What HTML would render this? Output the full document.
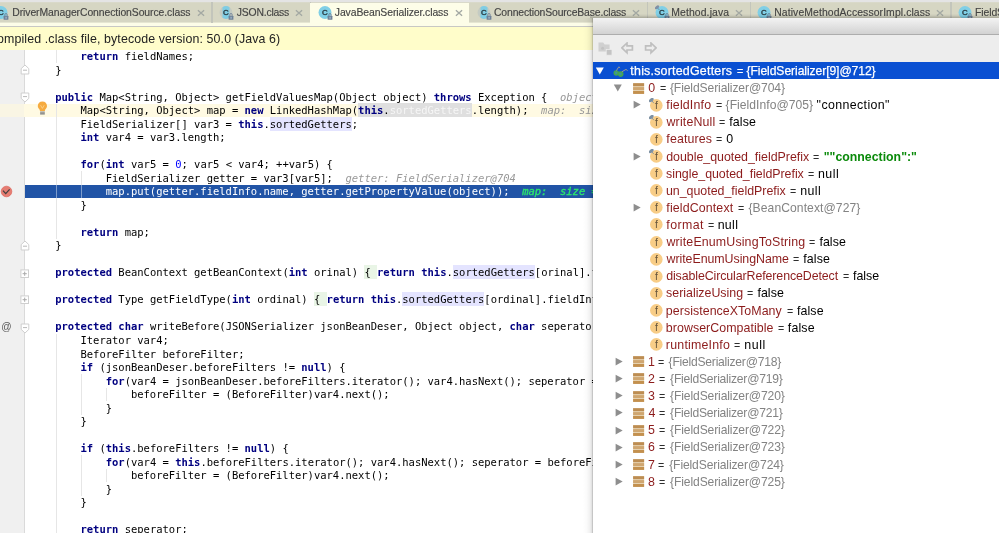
<!DOCTYPE html>
<html><head><meta charset="utf-8"><title>Debugger</title>
<style>
html,body{margin:0;padding:0}
body{width:999px;height:533px;overflow:hidden;position:relative;background:#fff;font-family:"Liberation Sans",sans-serif;}
#top{position:absolute;left:0;top:0;width:999px;height:3px;background:#e4e4e4}
#tabs{position:absolute;left:0;top:2px;width:999px;height:21px;background:linear-gradient(#dcdcd0 0,#d6d6c3 1px,#d6d6c3 20px,#e6e6d2 20px,#e6e6d2 21px);overflow:hidden}
#tabline{position:absolute;left:0;top:23px;width:999px;height:4px;background:#fdfde8;border-bottom:1px solid #c8c8c4;box-sizing:border-box}
.tabact{position:absolute;top:0.5px;height:23px;background:#fdfde8}
.tic{position:absolute;top:3.3px;line-height:0}
.ttx{position:absolute;top:4.4px;font-size:10.4px;color:#444;-webkit-text-stroke:0.15px #444;white-space:pre;line-height:14px}
.tcl{position:absolute;top:7.0px;line-height:0}
.tsep{position:absolute;top:0;width:1.3px;height:20.6px;background:#c3c5bb}
#banner{position:absolute;left:0;top:27px;width:999px;height:23px;background:#fffdca}
#banner span{position:absolute;left:-2.95px;top:5.2px;font-size:12.4px;letter-spacing:0.11px;color:#222;white-space:pre;line-height:15px}
#editor{position:absolute;left:0;top:50px;width:999px;height:483px;background:#fff;overflow:hidden}
#gutter{position:absolute;left:0;top:50px;width:25px;height:483px;background:#f0f0f0;border-right:1px solid #dadada;box-sizing:border-box}
.ln{position:absolute;left:0;width:999px;height:13.52px}
.ln.cur{background:#fffae3}
.ln.exec{background:#2154a6;left:25px;width:974px}
.tl{position:absolute;left:30.0px;height:14px;line-height:14px;font-family:"DejaVu Sans Mono","Liberation Mono",monospace;font-size:10.5px;letter-spacing:-0.0124px;white-space:pre;color:#000}
.tl b{color:#000080;font-weight:bold}
.tl i.n{color:#0000ff;font-style:normal}
.tl .h{background:#e4e4ff;padding:0.75px 0 0.55px}
.tl .s{background:#dfdfdf;padding:0.75px 0 0.55px}
.tl .w{color:#f6f6f6}
.tl .f{background:#e9f5e6;padding:0.75px 0 0.55px}
.tl .v{color:#999;font-style:italic}
.tl .g{color:#2be56c;font-style:italic;-webkit-text-stroke:0.35px #2be56c}
.tl.ex{color:#fff}
.tl.ex b{color:#fff}
.guide{position:absolute;width:1px;background:#e6e6e6}
.guide2{position:absolute;width:1px;background:#7d9ccc}
.gm{position:absolute}
.at{position:absolute;left:1.3px;top:320.3px;font-size:10.2px;color:#5a5a5a;line-height:14px}
#curgut{position:absolute;left:0;top:103.64px;width:24px;height:13.52px;background:#f9f5e4}
#popup{position:absolute;left:592.8px;top:18.2px;width:407px;height:515px;background:#fff;}
#pshadow{position:absolute;left:582.8px;top:18.2px;width:10px;height:515px;background:linear-gradient(to right,rgba(0,0,0,0),rgba(0,0,0,0.02) 40%,rgba(0,0,0,0.06) 70%,rgba(0,0,0,0.12) 88%,rgba(0,0,0,0.3))}
#pshadowt{position:absolute;left:590px;top:14.4px;width:409px;height:3.8px;background:linear-gradient(to bottom,rgba(0,0,0,0),rgba(0,0,0,0.06) 40%,rgba(0,0,0,0.22))}
#ptitle{position:absolute;left:0;top:0;width:100%;height:16.4px;background:linear-gradient(#f3f3f3,#d2d2d2);border-bottom:1px solid #adadad;box-sizing:border-box}
#ptool{position:absolute;left:0;top:16.4px;width:100%;height:27.4px;background:#ededed}
.row{position:absolute;left:0;width:100%;height:17.11px;color:#000;white-space:pre}
.row.sel{background:#0a50d2;color:#fff;height:16.9px;-webkit-text-stroke:0.25px #fff}
.row .ic{position:absolute;line-height:0}
.row .sg{position:absolute;line-height:17px}
.row .eq{transform:scaleX(0.86);transform-origin:0 0;color:#2e2e2e}
.row.sel .eq{color:#fff}
.nm{color:#8c1b1b}
.gr{color:#838383}
.sv{color:#0a8a0a;font-weight:bold}
#all{position:absolute;left:0;top:0;width:999px;height:533px;will-change:transform}
</style></head><body><div id="all">
<div id="top"></div>
<div id="tabs"><span class="tic" style="left:-6.1px"><svg width="16" height="16" viewBox="0 0 16 16"><circle cx="7" cy="7.5" r="6.5" fill="#80cfe6"/><text x="6.8" y="10.45" text-anchor="middle" font-family="Liberation Sans, sans-serif" font-size="8" fill="#27363c" stroke="#27363c" stroke-width="0.35">C</text><rect x="9.6" y="10.7" width="4.8" height="4.1" rx="0.5" fill="#6f8298"/><path d="M10.8 10.8 V9.7 a1.2 1.2 0 0 1 2.4 0 V10.8" stroke="#6f8298" stroke-width="0.9" fill="none"/><rect x="11.6" y="11.8" width="0.9" height="1.9" fill="#b9d3e4"/></svg></span><span class="ttx" style="left:12.24px;letter-spacing:-0.075px">DriverManagerConnectionSource.class</span><span class="tcl" style="left:196.5px"><svg width="8" height="8" viewBox="0 0 8 8"><path d="M0.9 1.2 L7.1 6.8 M7.1 1.2 L0.9 6.8" stroke="#a3a8a3" stroke-width="1.25" fill="none"/></svg></span><div class="tsep" style="left:211.4px"></div><span class="tic" style="left:219.3px"><svg width="16" height="16" viewBox="0 0 16 16"><circle cx="7" cy="7.5" r="6.4" fill="#9fb4c4" opacity="0.32"/><path d="M3.5 2.2 A6.4 6.4 0 0 1 10.5 2.2 V12.8 A6.4 6.4 0 0 1 3.5 12.8 Z" fill="#7fcde4"/><text x="6.8" y="10.45" text-anchor="middle" font-family="Liberation Sans, sans-serif" font-size="8" fill="#27363c" stroke="#27363c" stroke-width="0.35">C</text><rect x="9.6" y="10.7" width="4.8" height="4.1" rx="0.5" fill="#6f8298"/><path d="M10.8 10.8 V9.7 a1.2 1.2 0 0 1 2.4 0 V10.8" stroke="#6f8298" stroke-width="0.9" fill="none"/><rect x="11.6" y="11.8" width="0.9" height="1.9" fill="#b9d3e4"/></svg></span><span class="ttx" style="left:236.80px;letter-spacing:-0.195px">JSON.class</span><span class="tcl" style="left:295.1px"><svg width="8" height="8" viewBox="0 0 8 8"><path d="M0.9 1.2 L7.1 6.8 M7.1 1.2 L0.9 6.8" stroke="#a3a8a3" stroke-width="1.25" fill="none"/></svg></span><div class="tsep" style="left:309.7px"></div><div class="tabact" style="left:310.0px;width:159.1px"></div><span class="tic" style="left:317.6px"><svg width="16" height="16" viewBox="0 0 16 16"><circle cx="7" cy="7.5" r="6.5" fill="#80cfe6"/><text x="6.8" y="10.45" text-anchor="middle" font-family="Liberation Sans, sans-serif" font-size="8" fill="#27363c" stroke="#27363c" stroke-width="0.35">C</text><rect x="9.6" y="10.7" width="4.8" height="4.1" rx="0.5" fill="#6f8298"/><path d="M10.8 10.8 V9.7 a1.2 1.2 0 0 1 2.4 0 V10.8" stroke="#6f8298" stroke-width="0.9" fill="none"/><rect x="11.6" y="11.8" width="0.9" height="1.9" fill="#b9d3e4"/></svg></span><span class="ttx" style="left:334.80px;letter-spacing:-0.083px">JavaBeanSerializer.class</span><span class="tcl" style="left:454.5px"><svg width="8" height="8" viewBox="0 0 8 8"><path d="M0.9 1.2 L7.1 6.8 M7.1 1.2 L0.9 6.8" stroke="#a3a8a3" stroke-width="1.25" fill="none"/></svg></span><span class="tic" style="left:477.2px"><svg width="16" height="16" viewBox="0 0 16 16"><circle cx="7" cy="7.5" r="6.4" fill="#9fb4c4" opacity="0.32"/><path d="M3.5 2.2 A6.4 6.4 0 0 1 10.5 2.2 V12.8 A6.4 6.4 0 0 1 3.5 12.8 Z" fill="#7fcde4"/><text x="6.8" y="10.45" text-anchor="middle" font-family="Liberation Sans, sans-serif" font-size="8" fill="#27363c" stroke="#27363c" stroke-width="0.35">C</text><rect x="9.6" y="10.7" width="4.8" height="4.1" rx="0.5" fill="#6f8298"/><path d="M10.8 10.8 V9.7 a1.2 1.2 0 0 1 2.4 0 V10.8" stroke="#6f8298" stroke-width="0.9" fill="none"/><rect x="11.6" y="11.8" width="0.9" height="1.9" fill="#b9d3e4"/></svg></span><span class="ttx" style="left:494.01px;letter-spacing:-0.137px">ConnectionSourceBase.class</span><span class="tcl" style="left:632.0px"><svg width="8" height="8" viewBox="0 0 8 8"><path d="M0.9 1.2 L7.1 6.8 M7.1 1.2 L0.9 6.8" stroke="#a3a8a3" stroke-width="1.25" fill="none"/></svg></span><div class="tsep" style="left:646.6px"></div><span class="tic" style="left:654.8px"><svg width="16" height="16" viewBox="0 0 16 16"><circle cx="7" cy="7.5" r="6.5" fill="#80cfe6"/><text x="6.8" y="10.45" text-anchor="middle" font-family="Liberation Sans, sans-serif" font-size="8" fill="#27363c" stroke="#27363c" stroke-width="0.35">C</text><rect x="9.6" y="10.7" width="4.8" height="4.1" rx="0.5" fill="#6f8298"/><path d="M10.8 10.8 V9.7 a1.2 1.2 0 0 1 2.4 0 V10.8" stroke="#6f8298" stroke-width="0.9" fill="none"/><rect x="11.6" y="11.8" width="0.9" height="1.9" fill="#b9d3e4"/><ellipse cx="2.0" cy="2.3" rx="2.5" ry="1.4" transform="rotate(-40 2.0 2.3)" fill="#8090a6"/><path d="M2.6 3.0 L4.4 5.0" stroke="#6d7f95" stroke-width="0.8"/></svg></span><span class="ttx" style="left:671.24px;letter-spacing:0.121px">Method.java</span><span class="tcl" style="left:734.8px"><svg width="8" height="8" viewBox="0 0 8 8"><path d="M0.9 1.2 L7.1 6.8 M7.1 1.2 L0.9 6.8" stroke="#a3a8a3" stroke-width="1.25" fill="none"/></svg></span><div class="tsep" style="left:749.6px"></div><span class="tic" style="left:757.0px"><svg width="16" height="16" viewBox="0 0 16 16"><circle cx="7" cy="7.5" r="6.5" fill="#80cfe6"/><text x="6.8" y="10.45" text-anchor="middle" font-family="Liberation Sans, sans-serif" font-size="8" fill="#27363c" stroke="#27363c" stroke-width="0.35">C</text><rect x="9.6" y="10.7" width="4.8" height="4.1" rx="0.5" fill="#6f8298"/><path d="M10.8 10.8 V9.7 a1.2 1.2 0 0 1 2.4 0 V10.8" stroke="#6f8298" stroke-width="0.9" fill="none"/><rect x="11.6" y="11.8" width="0.9" height="1.9" fill="#b9d3e4"/></svg></span><span class="ttx" style="left:774.24px;letter-spacing:0.103px">NativeMethodAccessorImpl.class</span><span class="tcl" style="left:936.2px"><svg width="8" height="8" viewBox="0 0 8 8"><path d="M0.9 1.2 L7.1 6.8 M7.1 1.2 L0.9 6.8" stroke="#a3a8a3" stroke-width="1.25" fill="none"/></svg></span><div class="tsep" style="left:950.4px"></div><span class="tic" style="left:958.2px"><svg width="16" height="16" viewBox="0 0 16 16"><circle cx="7" cy="7.5" r="6.5" fill="#80cfe6"/><text x="6.8" y="10.45" text-anchor="middle" font-family="Liberation Sans, sans-serif" font-size="8" fill="#27363c" stroke="#27363c" stroke-width="0.35">C</text><rect x="9.6" y="10.7" width="4.8" height="4.1" rx="0.5" fill="#6f8298"/><path d="M10.8 10.8 V9.7 a1.2 1.2 0 0 1 2.4 0 V10.8" stroke="#6f8298" stroke-width="0.9" fill="none"/><rect x="11.6" y="11.8" width="0.9" height="1.9" fill="#b9d3e4"/></svg></span><span class="ttx" style="left:975.10px;letter-spacing:-0.1px">FieldSerializer.class</span><span class="tcl" style="left:1096.0px"><svg width="8" height="8" viewBox="0 0 8 8"><path d="M0.9 1.2 L7.1 6.8 M7.1 1.2 L0.9 6.8" stroke="#a3a8a3" stroke-width="1.25" fill="none"/></svg></span><div class="tsep" style="left:1120.0px"></div></div>
<div id="tabline"></div>
<div id="banner"><span>ompiled .class file, bytecode version: 50.0 (Java 6)</span></div>
<div id="editor"></div>
<div id="gutter"></div>
<div id="code">
<div class="ln" style="top:49.56px"></div>
<div class="ln" style="top:63.08px"></div>
<div class="ln" style="top:76.60px"></div>
<div class="ln" style="top:90.12px"></div>
<div class="ln cur" style="top:103.64px"></div>
<div class="ln" style="top:117.16px"></div>
<div class="ln" style="top:130.68px"></div>
<div class="ln" style="top:144.20px"></div>
<div class="ln" style="top:157.72px"></div>
<div class="ln" style="top:171.24px"></div>
<div class="ln exec" style="top:184.76px"></div>
<div class="ln" style="top:198.28px"></div>
<div class="ln" style="top:211.80px"></div>
<div class="ln" style="top:225.32px"></div>
<div class="ln" style="top:238.84px"></div>
<div class="ln" style="top:252.36px"></div>
<div class="ln" style="top:265.88px"></div>
<div class="ln" style="top:279.40px"></div>
<div class="ln" style="top:292.92px"></div>
<div class="ln" style="top:306.44px"></div>
<div class="ln" style="top:319.96px"></div>
<div class="ln" style="top:333.48px"></div>
<div class="ln" style="top:347.00px"></div>
<div class="ln" style="top:360.52px"></div>
<div class="ln" style="top:374.04px"></div>
<div class="ln" style="top:387.56px"></div>
<div class="ln" style="top:401.08px"></div>
<div class="ln" style="top:414.60px"></div>
<div class="ln" style="top:428.12px"></div>
<div class="ln" style="top:441.64px"></div>
<div class="ln" style="top:455.16px"></div>
<div class="ln" style="top:468.68px"></div>
<div class="ln" style="top:482.20px"></div>
<div class="ln" style="top:495.72px"></div>
<div class="ln" style="top:509.24px"></div>
<div class="ln" style="top:522.76px"></div>
<div class="guide" style="left:55.8px;top:49.6px;height:13.5px"></div><div class="guide" style="left:55.8px;top:103.6px;height:135.2px"></div><div class="guide" style="left:81.1px;top:171.2px;height:27.0px"></div><div class="guide" style="left:55.8px;top:333.5px;height:202.8px"></div><div class="guide" style="left:81.1px;top:374.0px;height:40.6px"></div><div class="guide" style="left:106.3px;top:387.6px;height:13.5px"></div><div class="guide" style="left:81.1px;top:455.2px;height:40.6px"></div><div class="guide" style="left:106.3px;top:468.7px;height:13.5px"></div>
<div class="guide2" style="left:55.8px;top:184.8px;height:13.5px"></div><div class="guide2" style="left:81.1px;top:184.8px;height:13.5px"></div>
<div class="tl" style="top:49.10px">        <b>return</b> fieldNames;</div>
<div class="tl" style="top:63.10px">    }</div>
<div class="tl" style="top:90.10px">    <b>public</b> Map&lt;String, Object&gt; getFieldValuesMap(Object object) <b>throws</b> Exception {  <span class="v">object: JavaBeanSerializer@703</span></div>
<div class="tl" style="top:103.10px">        Map&lt;String, Object&gt; map = <b>new</b> LinkedHashMap(<span class="s"><b>this</b>.<span class="w">sortedGetters</span></span>.length);  <span class="v">map:  size = 0</span></div>
<div class="tl" style="top:117.10px">        FieldSerializer[] var3 = <b>this</b>.<span class="h">sortedGetters</span>;</div>
<div class="tl" style="top:130.10px">        <b>int</b> var4 = var3.length;</div>
<div class="tl" style="top:157.10px">        <b>for</b>(<b>int</b> var5 = <i class="n">0</i>; var5 &lt; var4; ++var5) {</div>
<div class="tl" style="top:171.10px">            FieldSerializer getter = var3[var5];  <span class="v">getter: FieldSerializer@704</span></div>
<div class="tl ex" style="top:184.10px">            map.put(getter.fieldInfo.name, getter.getPropertyValue(object));  <span class="g">map:  size = 0</span></div>
<div class="tl" style="top:198.10px">        }</div>
<div class="tl" style="top:225.10px">        <b>return</b> map;</div>
<div class="tl" style="top:238.10px">    }</div>
<div class="tl" style="top:265.10px">    <b>protected</b> BeanContext getBeanContext(<b>int</b> orinal) <span class="f">{ </span><b>return</b> <b>this</b>.<span class="h">sortedGetters</span>[orinal].fieldContext;<span class="f"> }</span></div>
<div class="tl" style="top:292.10px">    <b>protected</b> Type getFieldType(<b>int</b> ordinal) <span class="f">{ </span><b>return</b> <b>this</b>.<span class="h">sortedGetters</span>[ordinal].fieldInfo.fieldType;<span class="f"> }</span></div>
<div class="tl" style="top:319.10px">    <b>protected</b> <b>char</b> writeBefore(JSONSerializer jsonBeanDeser, Object object, <b>char</b> seperator) {</div>
<div class="tl" style="top:333.10px">        Iterator var4;</div>
<div class="tl" style="top:347.10px">        BeforeFilter beforeFilter;</div>
<div class="tl" style="top:360.10px">        <b>if</b> (jsonBeanDeser.beforeFilters != <b>null</b>) {</div>
<div class="tl" style="top:374.10px">            <b>for</b>(var4 = jsonBeanDeser.beforeFilters.iterator(); var4.hasNext(); seperator = beforeFilter.writeBefore(jsonBeanDeser, object, seperator)) {</div>
<div class="tl" style="top:387.10px">                beforeFilter = (BeforeFilter)var4.next();</div>
<div class="tl" style="top:401.10px">            }</div>
<div class="tl" style="top:414.10px">        }</div>
<div class="tl" style="top:441.10px">        <b>if</b> (<b>this</b>.beforeFilters != <b>null</b>) {</div>
<div class="tl" style="top:455.10px">            <b>for</b>(var4 = <b>this</b>.beforeFilters.iterator(); var4.hasNext(); seperator = beforeFilter.writeBefore(jsonBeanDeser, object, seperator)) {</div>
<div class="tl" style="top:468.10px">                beforeFilter = (BeforeFilter)var4.next();</div>
<div class="tl" style="top:482.10px">            }</div>
<div class="tl" style="top:495.10px">        }</div>
<div class="tl" style="top:522.10px">        <b>return</b> seperator;</div>
</div>
<div id="curgut"></div>
<div id="marks"><svg class="gm" style="left:19.5px;top:64.2px" width="10" height="11" viewBox="0 0 10 11"><path d="M1.2 10 V4.6 L5 1.0 L8.8 4.6 V10 Z" fill="#fff" stroke="#cfcfcf" stroke-width="1"/><path d="M3 6.2 H7" stroke="#b9b9b9" stroke-width="1"/></svg><svg class="gm" style="left:19.5px;top:92.3px" width="10" height="11" viewBox="0 0 10 11"><path d="M1.2 1 V6.4 L5 10 L8.8 6.4 V1 Z" fill="#fff" stroke="#cfcfcf" stroke-width="1"/><path d="M3 4.6 H7" stroke="#b9b9b9" stroke-width="1"/></svg><svg class="gm" style="left:19.5px;top:240.1px" width="10" height="11" viewBox="0 0 10 11"><path d="M1.2 10 V4.6 L5 1.0 L8.8 4.6 V10 Z" fill="#fff" stroke="#cfcfcf" stroke-width="1"/><path d="M3 6.2 H7" stroke="#b9b9b9" stroke-width="1"/></svg><svg class="gm" style="left:19.9px;top:268.8px" width="10" height="10" viewBox="0 0 10 10"><rect x="0.9" y="0.9" width="7.6" height="7.6" fill="#fff" stroke="#cfcfcf" stroke-width="1"/><path d="M2.6 4.7 H6.8 M4.7 2.6 V6.8" stroke="#a9a9a9" stroke-width="1"/></svg><svg class="gm" style="left:19.9px;top:295.4px" width="10" height="10" viewBox="0 0 10 10"><rect x="0.9" y="0.9" width="7.6" height="7.6" fill="#fff" stroke="#cfcfcf" stroke-width="1"/><path d="M2.6 4.7 H6.8 M4.7 2.6 V6.8" stroke="#a9a9a9" stroke-width="1"/></svg><svg class="gm" style="left:19.5px;top:322.9px" width="10" height="11" viewBox="0 0 10 11"><path d="M1.2 1 V6.4 L5 10 L8.8 6.4 V1 Z" fill="#fff" stroke="#cfcfcf" stroke-width="1"/><path d="M3 4.6 H7" stroke="#b9b9b9" stroke-width="1"/></svg><svg class="gm" style="left:37px;top:101px" width="11" height="15" viewBox="0 0 11 15"><path d="M5.4 0.5 C2.6 0.5 0.8 2.5 0.8 4.9 C0.8 6.6 1.9 7.6 2.6 8.6 L3 9.9 H7.8 L8.2 8.6 C8.9 7.6 10 6.6 10 4.9 C10 2.5 8.2 0.5 5.4 0.5 Z" fill="#f6ab3f"/><path d="M3.6 4.2 L5.4 7.4 L7.2 4.2" stroke="#fbd08a" stroke-width="0.9" fill="none"/><rect x="3.1" y="10.5" width="4.7" height="1.3" fill="#8a8a8a"/><rect x="3.1" y="12.2" width="4.7" height="1.3" fill="#7a7a7a"/></svg><svg class="gm" style="left:0px;top:184.55px" width="13" height="13" viewBox="0 0 13 13"><circle cx="6.5" cy="6.5" r="5.3" fill="#e57d72" stroke="#dc6259" stroke-width="0.7"/><path d="M3.0 5.6 L5.7 8.7 L9.6 4.4" stroke="#3f3f3f" stroke-width="1.2" fill="none"/></svg><span class="at">@</span></div>
<div id="pshadow"></div><div id="pshadowt"></div>
<div id="popup">
<div id="ptitle"></div>
<div id="ptool">
<svg style="position:absolute;left:5.6px;top:7.6px" width="15" height="14" viewBox="0 0 15 14"><path d="M0.5 0.6 H5.2 L6.6 2.6 H11.6 V9.6 H0.5 Z" fill="#d0d0d0"/><circle cx="4.6" cy="6.2" r="1.5" fill="#c2c2c2"/><rect x="8.2" y="7.4" width="5.8" height="5.8" fill="#c4c4c4" stroke="#ededed" stroke-width="0.8"/></svg>
<svg style="position:absolute;left:28.4px;top:7.8px" width="13" height="13" viewBox="0 0 13 13"><path d="M6 1 L0.9 5.9 L6 10.8 V8 H11.4 V3.8 H6 Z" fill="none" stroke="#bfbfbf" stroke-width="1.7" stroke-linejoin="miter"/></svg>
<svg style="position:absolute;left:51.6px;top:7.8px" width="13" height="13" viewBox="0 0 13 13"><path d="M7 1 L12.1 5.9 L7 10.8 V8 H1.6 V3.8 H7 Z" fill="none" stroke="#bfbfbf" stroke-width="1.7" stroke-linejoin="miter"/></svg>
</div>
</div>
<div id="treewrap" style="position:absolute;left:593px;top:0;width:406px;height:533px;overflow:hidden">
<div class="row sel" style="top:61.85px"><span class="ic" style="left:2.3px;top:3.9px"><svg width="10" height="10" viewBox="0 0 10 10"><path d="M0.8 1.6 L8.8 1.6 L4.8 8.4 Z" fill="#fff"/></svg></span><span class="ic" style="left:20.00px;top:3.7px"><svg width="16" height="12" viewBox="0 0 16 12"><circle cx="3.2" cy="7.0" r="2.7" fill="#45a650"/><circle cx="7.7" cy="8.1" r="2.8" fill="#45a650"/><circle cx="3.1" cy="6.9" r="1.3" fill="#3f8fb0" opacity="0.75"/><circle cx="7.6" cy="8.0" r="1.3" fill="#3f8fb0" opacity="0.75"/><path d="M3.4 4.6 L5.8 0.8 L7.1 1.9 M8.8 5.8 L13.0 3.4 L14.6 4.6" stroke="#a89f8c" stroke-width="0.9" fill="none"/></svg></span><span class="sg " style="left:37.36px;top:1.50px;letter-spacing:0.224px;font-size:12.4px">this.sortedGetters</span><span class="sg eq" style="left:143.65px;top:1.50px;font-size:12.4px">=</span><span class="sg " style="left:153.51px;top:1.50px;letter-spacing:-0.063px;font-size:12.1px">{FieldSerializer[9]@712}</span></div>
<div class="row" style="top:78.96px"><span class="ic" style="left:19.8px;top:4.1px"><svg width="10" height="10" viewBox="0 0 10 10"><path d="M0.8 1.6 L8.8 1.6 L4.8 8.4 Z" fill="#8e8e8e"/></svg></span><span class="ic" style="left:40.00px;top:3.65px"><svg width="12" height="12" viewBox="0 0 12 12"><rect x="0.1" y="0.2" width="11" height="10.7" fill="#e6d2b0"/><rect x="0.1" y="0.2" width="11" height="2.9" fill="#bd8d52"/><rect x="0.1" y="4.1" width="11" height="2.9" fill="#cfa670"/><rect x="0.1" y="8.0" width="11" height="2.9" fill="#c3904e"/></svg></span><span class="sg nm" style="left:55.20px;top:1.39px;letter-spacing:0.0px;font-size:12.4px">0</span><span class="sg eq" style="left:66.55px;top:1.39px;font-size:12.4px">=</span><span class="sg gr" style="left:76.91px;top:1.39px;letter-spacing:-0.103px;font-size:12.1px">{FieldSerializer@704}</span></div>
<div class="row" style="top:96.07px"><span class="ic" style="left:38.6px;top:4.4px"><svg width="10" height="10" viewBox="0 0 10 10"><path d="M1.6 0.8 L8.7 4.6 L1.6 8.4 Z" fill="#8e8e8e"/></svg></span><span class="ic" style="left:55.95px;top:1.6px"><svg width="14" height="14" viewBox="0 0 14 14"><circle cx="7.3" cy="7.4" r="6.3" fill="#f8cd87"/><text x="7.5" y="11.0" text-anchor="middle" font-family="Liberation Sans, sans-serif" font-size="10.4" fill="#66553c">f</text><ellipse cx="2.3" cy="2.0" rx="2.7" ry="1.55" transform="rotate(-38 2.3 2.0)" fill="#7d90a2"/><path d="M2.6 2.6 L4.9 5.2" stroke="#7d90a2" stroke-width="0.9"/></svg></span><span class="sg nm" style="left:73.33px;top:1.28px;letter-spacing:0.163px;font-size:12.4px">fieldInfo</span><span class="sg eq" style="left:122.65px;top:1.28px;font-size:12.4px">=</span><span class="sg gr" style="left:132.61px;top:1.28px;letter-spacing:0.043px;font-size:12.1px">{FieldInfo@705}</span><span class="sg " style="left:223.61px;top:1.28px;letter-spacing:0.372px;font-size:12.4px">"connection"</span></div>
<div class="row" style="top:113.18px"><span class="ic" style="left:55.95px;top:1.6px"><svg width="14" height="14" viewBox="0 0 14 14"><circle cx="7.3" cy="7.4" r="6.3" fill="#f8cd87"/><text x="7.5" y="11.0" text-anchor="middle" font-family="Liberation Sans, sans-serif" font-size="10.4" fill="#66553c">f</text><ellipse cx="2.3" cy="2.0" rx="2.7" ry="1.55" transform="rotate(-38 2.3 2.0)" fill="#7d90a2"/><path d="M2.6 2.6 L4.9 5.2" stroke="#7d90a2" stroke-width="0.9"/></svg></span><span class="sg nm" style="left:73.52px;top:1.17px;letter-spacing:0.152px;font-size:12.4px">writeNull</span><span class="sg eq" style="left:126.05px;top:1.17px;font-size:12.4px">=</span><span class="sg " style="left:136.23px;top:1.17px;letter-spacing:0.113px;font-size:12.4px">false</span></div>
<div class="row" style="top:130.29px"><span class="ic" style="left:55.95px;top:1.6px"><svg width="14" height="14" viewBox="0 0 14 14"><circle cx="7.3" cy="7.4" r="6.3" fill="#f8cd87"/><text x="7.5" y="11.0" text-anchor="middle" font-family="Liberation Sans, sans-serif" font-size="10.4" fill="#66553c">f</text></svg></span><span class="sg nm" style="left:73.33px;top:1.06px;letter-spacing:0.133px;font-size:12.4px">features</span><span class="sg eq" style="left:123.05px;top:1.06px;font-size:12.4px">=</span><span class="sg " style="left:133.30px;top:1.06px;letter-spacing:0.0px;font-size:12.4px">0</span></div>
<div class="row" style="top:147.40px"><span class="ic" style="left:38.6px;top:4.4px"><svg width="10" height="10" viewBox="0 0 10 10"><path d="M1.6 0.8 L8.7 4.6 L1.6 8.4 Z" fill="#8e8e8e"/></svg></span><span class="ic" style="left:55.95px;top:1.6px"><svg width="14" height="14" viewBox="0 0 14 14"><circle cx="7.3" cy="7.4" r="6.3" fill="#f8cd87"/><text x="7.5" y="11.0" text-anchor="middle" font-family="Liberation Sans, sans-serif" font-size="10.4" fill="#66553c">f</text><ellipse cx="2.3" cy="2.0" rx="2.7" ry="1.55" transform="rotate(-38 2.3 2.0)" fill="#7d90a2"/><path d="M2.6 2.6 L4.9 5.2" stroke="#7d90a2" stroke-width="0.9"/></svg></span><span class="sg nm" style="left:73.14px;top:1.95px;letter-spacing:-0.01px;font-size:12.4px">double_quoted_fieldPrefix</span><span class="sg eq" style="left:220.35px;top:1.95px;font-size:12.4px">=</span><span class="sg sv" style="left:230.76px;top:1.95px;letter-spacing:0.011px;font-size:12.3px;font-weight:bold">""connection":"</span></div>
<div class="row" style="top:164.51px"><span class="ic" style="left:55.95px;top:1.6px"><svg width="14" height="14" viewBox="0 0 14 14"><circle cx="7.3" cy="7.4" r="6.3" fill="#f8cd87"/><text x="7.5" y="11.0" text-anchor="middle" font-family="Liberation Sans, sans-serif" font-size="10.4" fill="#66553c">f</text></svg></span><span class="sg nm" style="left:73.10px;top:1.84px;letter-spacing:-0.031px;font-size:12.4px">single_quoted_fieldPrefix</span><span class="sg eq" style="left:215.45px;top:1.84px;font-size:12.4px">=</span><span class="sg " style="left:224.94px;top:1.84px;letter-spacing:0.537px;font-size:12.4px">null</span></div>
<div class="row" style="top:181.62px"><span class="ic" style="left:55.95px;top:1.6px"><svg width="14" height="14" viewBox="0 0 14 14"><circle cx="7.3" cy="7.4" r="6.3" fill="#f8cd87"/><text x="7.5" y="11.0" text-anchor="middle" font-family="Liberation Sans, sans-serif" font-size="10.4" fill="#66553c">f</text></svg></span><span class="sg nm" style="left:72.90px;top:1.73px;letter-spacing:-0.002px;font-size:12.4px">un_quoted_fieldPrefix</span><span class="sg eq" style="left:197.35px;top:1.73px;font-size:12.4px">=</span><span class="sg " style="left:207.14px;top:1.73px;letter-spacing:0.447px;font-size:12.4px">null</span></div>
<div class="row" style="top:198.73px"><span class="ic" style="left:38.6px;top:4.4px"><svg width="10" height="10" viewBox="0 0 10 10"><path d="M1.6 0.8 L8.7 4.6 L1.6 8.4 Z" fill="#8e8e8e"/></svg></span><span class="ic" style="left:55.95px;top:1.6px"><svg width="14" height="14" viewBox="0 0 14 14"><circle cx="7.3" cy="7.4" r="6.3" fill="#f8cd87"/><text x="7.5" y="11.0" text-anchor="middle" font-family="Liberation Sans, sans-serif" font-size="10.4" fill="#66553c">f</text></svg></span><span class="sg nm" style="left:73.33px;top:1.62px;letter-spacing:0.127px;font-size:12.4px">fieldContext</span><span class="sg eq" style="left:145.05px;top:1.62px;font-size:12.4px">=</span><span class="sg gr" style="left:155.51px;top:1.62px;letter-spacing:0.083px;font-size:12.1px">{BeanContext@727}</span></div>
<div class="row" style="top:215.84px"><span class="ic" style="left:55.95px;top:1.6px"><svg width="14" height="14" viewBox="0 0 14 14"><circle cx="7.3" cy="7.4" r="6.3" fill="#f8cd87"/><text x="7.5" y="11.0" text-anchor="middle" font-family="Liberation Sans, sans-serif" font-size="10.4" fill="#66553c">f</text></svg></span><span class="sg nm" style="left:73.33px;top:1.51px;letter-spacing:0.404px;font-size:12.4px">format</span><span class="sg eq" style="left:115.15px;top:1.51px;font-size:12.4px">=</span><span class="sg " style="left:124.64px;top:1.51px;letter-spacing:0.347px;font-size:12.4px">null</span></div>
<div class="row" style="top:232.95px"><span class="ic" style="left:55.95px;top:1.6px"><svg width="14" height="14" viewBox="0 0 14 14"><circle cx="7.3" cy="7.4" r="6.3" fill="#f8cd87"/><text x="7.5" y="11.0" text-anchor="middle" font-family="Liberation Sans, sans-serif" font-size="10.4" fill="#66553c">f</text></svg></span><span class="sg nm" style="left:73.52px;top:1.40px;letter-spacing:0.14px;font-size:12.4px">writeEnumUsingToString</span><span class="sg eq" style="left:216.25px;top:1.40px;font-size:12.4px">=</span><span class="sg " style="left:226.43px;top:1.40px;letter-spacing:0.05px;font-size:12.4px">false</span></div>
<div class="row" style="top:250.06px"><span class="ic" style="left:55.95px;top:1.6px"><svg width="14" height="14" viewBox="0 0 14 14"><circle cx="7.3" cy="7.4" r="6.3" fill="#f8cd87"/><text x="7.5" y="11.0" text-anchor="middle" font-family="Liberation Sans, sans-serif" font-size="10.4" fill="#66553c">f</text></svg></span><span class="sg nm" style="left:73.52px;top:1.29px;letter-spacing:-0.051px;font-size:12.4px">writeEnumUsingName</span><span class="sg eq" style="left:200.05px;top:1.29px;font-size:12.4px">=</span><span class="sg " style="left:210.23px;top:1.29px;letter-spacing:0.113px;font-size:12.4px">false</span></div>
<div class="row" style="top:267.17px"><span class="ic" style="left:55.95px;top:1.6px"><svg width="14" height="14" viewBox="0 0 14 14"><circle cx="7.3" cy="7.4" r="6.3" fill="#f8cd87"/><text x="7.5" y="11.0" text-anchor="middle" font-family="Liberation Sans, sans-serif" font-size="10.4" fill="#66553c">f</text></svg></span><span class="sg nm" style="left:73.14px;top:1.18px;letter-spacing:-0.101px;font-size:12.4px">disableCircularReferenceDetect</span><span class="sg eq" style="left:249.65px;top:1.18px;font-size:12.4px">=</span><span class="sg " style="left:259.93px;top:1.18px;letter-spacing:0.016px;font-size:12.4px">false</span></div>
<div class="row" style="top:284.28px"><span class="ic" style="left:55.95px;top:1.6px"><svg width="14" height="14" viewBox="0 0 14 14"><circle cx="7.3" cy="7.4" r="6.3" fill="#f8cd87"/><text x="7.5" y="11.0" text-anchor="middle" font-family="Liberation Sans, sans-serif" font-size="10.4" fill="#66553c">f</text></svg></span><span class="sg nm" style="left:73.10px;top:1.07px;letter-spacing:-0.012px;font-size:12.4px">serializeUsing</span><span class="sg eq" style="left:153.95px;top:1.07px;font-size:12.4px">=</span><span class="sg " style="left:164.43px;top:1.07px;letter-spacing:0.05px;font-size:12.4px">false</span></div>
<div class="row" style="top:301.39px"><span class="ic" style="left:55.95px;top:1.6px"><svg width="14" height="14" viewBox="0 0 14 14"><circle cx="7.3" cy="7.4" r="6.3" fill="#f8cd87"/><text x="7.5" y="11.0" text-anchor="middle" font-family="Liberation Sans, sans-serif" font-size="10.4" fill="#66553c">f</text></svg></span><span class="sg nm" style="left:72.86px;top:1.96px;letter-spacing:0.049px;font-size:12.4px">persistenceXToMany</span><span class="sg eq" style="left:193.65px;top:1.96px;font-size:12.4px">=</span><span class="sg " style="left:203.93px;top:1.96px;letter-spacing:0.113px;font-size:12.4px">false</span></div>
<div class="row" style="top:318.50px"><span class="ic" style="left:55.95px;top:1.6px"><svg width="14" height="14" viewBox="0 0 14 14"><circle cx="7.3" cy="7.4" r="6.3" fill="#f8cd87"/><text x="7.5" y="11.0" text-anchor="middle" font-family="Liberation Sans, sans-serif" font-size="10.4" fill="#66553c">f</text></svg></span><span class="sg nm" style="left:72.86px;top:1.85px;letter-spacing:0.052px;font-size:12.4px">browserCompatible</span><span class="sg eq" style="left:184.65px;top:1.85px;font-size:12.4px">=</span><span class="sg " style="left:194.83px;top:1.85px;letter-spacing:0.15px;font-size:12.4px">false</span></div>
<div class="row" style="top:335.61px"><span class="ic" style="left:55.95px;top:1.6px"><svg width="14" height="14" viewBox="0 0 14 14"><circle cx="7.3" cy="7.4" r="6.3" fill="#f8cd87"/><text x="7.5" y="11.0" text-anchor="middle" font-family="Liberation Sans, sans-serif" font-size="10.4" fill="#66553c">f</text></svg></span><span class="sg nm" style="left:72.86px;top:1.74px;letter-spacing:0.205px;font-size:12.4px">runtimeInfo</span><span class="sg eq" style="left:141.25px;top:1.74px;font-size:12.4px">=</span><span class="sg " style="left:151.34px;top:1.74px;letter-spacing:0.543px;font-size:12.4px">null</span></div>
<div class="row" style="top:352.72px"><span class="ic" style="left:21.0px;top:4.4px"><svg width="10" height="10" viewBox="0 0 10 10"><path d="M1.6 0.8 L8.7 4.6 L1.6 8.4 Z" fill="#8e8e8e"/></svg></span><span class="ic" style="left:40.00px;top:3.65px"><svg width="12" height="12" viewBox="0 0 12 12"><rect x="0.1" y="0.2" width="11" height="10.7" fill="#e6d2b0"/><rect x="0.1" y="0.2" width="11" height="2.9" fill="#bd8d52"/><rect x="0.1" y="4.1" width="11" height="2.9" fill="#cfa670"/><rect x="0.1" y="8.0" width="11" height="2.9" fill="#c3904e"/></svg></span><span class="sg nm" style="left:54.90px;top:1.63px;letter-spacing:0.0px;font-size:12.4px">1</span><span class="sg eq" style="left:64.55px;top:1.63px;font-size:12.4px">=</span><span class="sg gr" style="left:75.61px;top:1.63px;letter-spacing:-0.227px;font-size:12.1px">{FieldSerializer@718}</span></div>
<div class="row" style="top:369.83px"><span class="ic" style="left:21.0px;top:4.4px"><svg width="10" height="10" viewBox="0 0 10 10"><path d="M1.6 0.8 L8.7 4.6 L1.6 8.4 Z" fill="#8e8e8e"/></svg></span><span class="ic" style="left:40.00px;top:3.65px"><svg width="12" height="12" viewBox="0 0 12 12"><rect x="0.1" y="0.2" width="11" height="10.7" fill="#e6d2b0"/><rect x="0.1" y="0.2" width="11" height="2.9" fill="#bd8d52"/><rect x="0.1" y="4.1" width="11" height="2.9" fill="#cfa670"/><rect x="0.1" y="8.0" width="11" height="2.9" fill="#c3904e"/></svg></span><span class="sg nm" style="left:55.04px;top:1.52px;letter-spacing:0.0px;font-size:12.4px">2</span><span class="sg eq" style="left:66.35px;top:1.52px;font-size:12.4px">=</span><span class="sg gr" style="left:77.11px;top:1.52px;letter-spacing:-0.227px;font-size:12.1px">{FieldSerializer@719}</span></div>
<div class="row" style="top:386.94px"><span class="ic" style="left:21.0px;top:4.4px"><svg width="10" height="10" viewBox="0 0 10 10"><path d="M1.6 0.8 L8.7 4.6 L1.6 8.4 Z" fill="#8e8e8e"/></svg></span><span class="ic" style="left:40.00px;top:3.65px"><svg width="12" height="12" viewBox="0 0 12 12"><rect x="0.1" y="0.2" width="11" height="10.7" fill="#e6d2b0"/><rect x="0.1" y="0.2" width="11" height="2.9" fill="#bd8d52"/><rect x="0.1" y="4.1" width="11" height="2.9" fill="#cfa670"/><rect x="0.1" y="8.0" width="11" height="2.9" fill="#c3904e"/></svg></span><span class="sg nm" style="left:54.96px;top:1.41px;letter-spacing:0.0px;font-size:12.4px">3</span><span class="sg eq" style="left:66.35px;top:1.41px;font-size:12.4px">=</span><span class="sg gr" style="left:77.11px;top:1.41px;letter-spacing:-0.121px;font-size:12.1px">{FieldSerializer@720}</span></div>
<div class="row" style="top:404.05px"><span class="ic" style="left:21.0px;top:4.4px"><svg width="10" height="10" viewBox="0 0 10 10"><path d="M1.6 0.8 L8.7 4.6 L1.6 8.4 Z" fill="#8e8e8e"/></svg></span><span class="ic" style="left:40.00px;top:3.65px"><svg width="12" height="12" viewBox="0 0 12 12"><rect x="0.1" y="0.2" width="11" height="10.7" fill="#e6d2b0"/><rect x="0.1" y="0.2" width="11" height="2.9" fill="#bd8d52"/><rect x="0.1" y="4.1" width="11" height="2.9" fill="#cfa670"/><rect x="0.1" y="8.0" width="11" height="2.9" fill="#c3904e"/></svg></span><span class="sg nm" style="left:55.44px;top:1.30px;letter-spacing:0.0px;font-size:12.4px">4</span><span class="sg eq" style="left:66.35px;top:1.30px;font-size:12.4px">=</span><span class="sg gr" style="left:77.11px;top:1.30px;letter-spacing:-0.227px;font-size:12.1px">{FieldSerializer@721}</span></div>
<div class="row" style="top:421.16px"><span class="ic" style="left:21.0px;top:4.4px"><svg width="10" height="10" viewBox="0 0 10 10"><path d="M1.6 0.8 L8.7 4.6 L1.6 8.4 Z" fill="#8e8e8e"/></svg></span><span class="ic" style="left:40.00px;top:3.65px"><svg width="12" height="12" viewBox="0 0 12 12"><rect x="0.1" y="0.2" width="11" height="10.7" fill="#e6d2b0"/><rect x="0.1" y="0.2" width="11" height="2.9" fill="#bd8d52"/><rect x="0.1" y="4.1" width="11" height="2.9" fill="#cfa670"/><rect x="0.1" y="8.0" width="11" height="2.9" fill="#c3904e"/></svg></span><span class="sg nm" style="left:54.94px;top:1.19px;letter-spacing:0.0px;font-size:12.4px">5</span><span class="sg eq" style="left:66.35px;top:1.19px;font-size:12.4px">=</span><span class="sg gr" style="left:77.11px;top:1.19px;letter-spacing:-0.121px;font-size:12.1px">{FieldSerializer@722}</span></div>
<div class="row" style="top:438.27px"><span class="ic" style="left:21.0px;top:4.4px"><svg width="10" height="10" viewBox="0 0 10 10"><path d="M1.6 0.8 L8.7 4.6 L1.6 8.4 Z" fill="#8e8e8e"/></svg></span><span class="ic" style="left:40.00px;top:3.65px"><svg width="12" height="12" viewBox="0 0 12 12"><rect x="0.1" y="0.2" width="11" height="10.7" fill="#e6d2b0"/><rect x="0.1" y="0.2" width="11" height="2.9" fill="#bd8d52"/><rect x="0.1" y="4.1" width="11" height="2.9" fill="#cfa670"/><rect x="0.1" y="8.0" width="11" height="2.9" fill="#c3904e"/></svg></span><span class="sg nm" style="left:55.03px;top:1.08px;letter-spacing:0.0px;font-size:12.4px">6</span><span class="sg eq" style="left:66.35px;top:1.08px;font-size:12.4px">=</span><span class="sg gr" style="left:77.11px;top:1.08px;letter-spacing:-0.121px;font-size:12.1px">{FieldSerializer@723}</span></div>
<div class="row" style="top:455.38px"><span class="ic" style="left:21.0px;top:4.4px"><svg width="10" height="10" viewBox="0 0 10 10"><path d="M1.6 0.8 L8.7 4.6 L1.6 8.4 Z" fill="#8e8e8e"/></svg></span><span class="ic" style="left:40.00px;top:3.65px"><svg width="12" height="12" viewBox="0 0 12 12"><rect x="0.1" y="0.2" width="11" height="10.7" fill="#e6d2b0"/><rect x="0.1" y="0.2" width="11" height="2.9" fill="#bd8d52"/><rect x="0.1" y="4.1" width="11" height="2.9" fill="#cfa670"/><rect x="0.1" y="8.0" width="11" height="2.9" fill="#c3904e"/></svg></span><span class="sg nm" style="left:55.04px;top:1.97px;letter-spacing:0.0px;font-size:12.4px">7</span><span class="sg eq" style="left:65.45px;top:1.97px;font-size:12.4px">=</span><span class="sg gr" style="left:76.21px;top:1.97px;letter-spacing:-0.124px;font-size:12.1px">{FieldSerializer@724}</span></div>
<div class="row" style="top:472.49px"><span class="ic" style="left:21.0px;top:4.4px"><svg width="10" height="10" viewBox="0 0 10 10"><path d="M1.6 0.8 L8.7 4.6 L1.6 8.4 Z" fill="#8e8e8e"/></svg></span><span class="ic" style="left:40.00px;top:3.65px"><svg width="12" height="12" viewBox="0 0 12 12"><rect x="0.1" y="0.2" width="11" height="10.7" fill="#e6d2b0"/><rect x="0.1" y="0.2" width="11" height="2.9" fill="#bd8d52"/><rect x="0.1" y="4.1" width="11" height="2.9" fill="#cfa670"/><rect x="0.1" y="8.0" width="11" height="2.9" fill="#c3904e"/></svg></span><span class="sg nm" style="left:55.10px;top:1.86px;letter-spacing:0.0px;font-size:12.4px">8</span><span class="sg eq" style="left:66.35px;top:1.86px;font-size:12.4px">=</span><span class="sg gr" style="left:77.11px;top:1.86px;letter-spacing:-0.121px;font-size:12.1px">{FieldSerializer@725}</span></div>
</div>
</div></body></html>
